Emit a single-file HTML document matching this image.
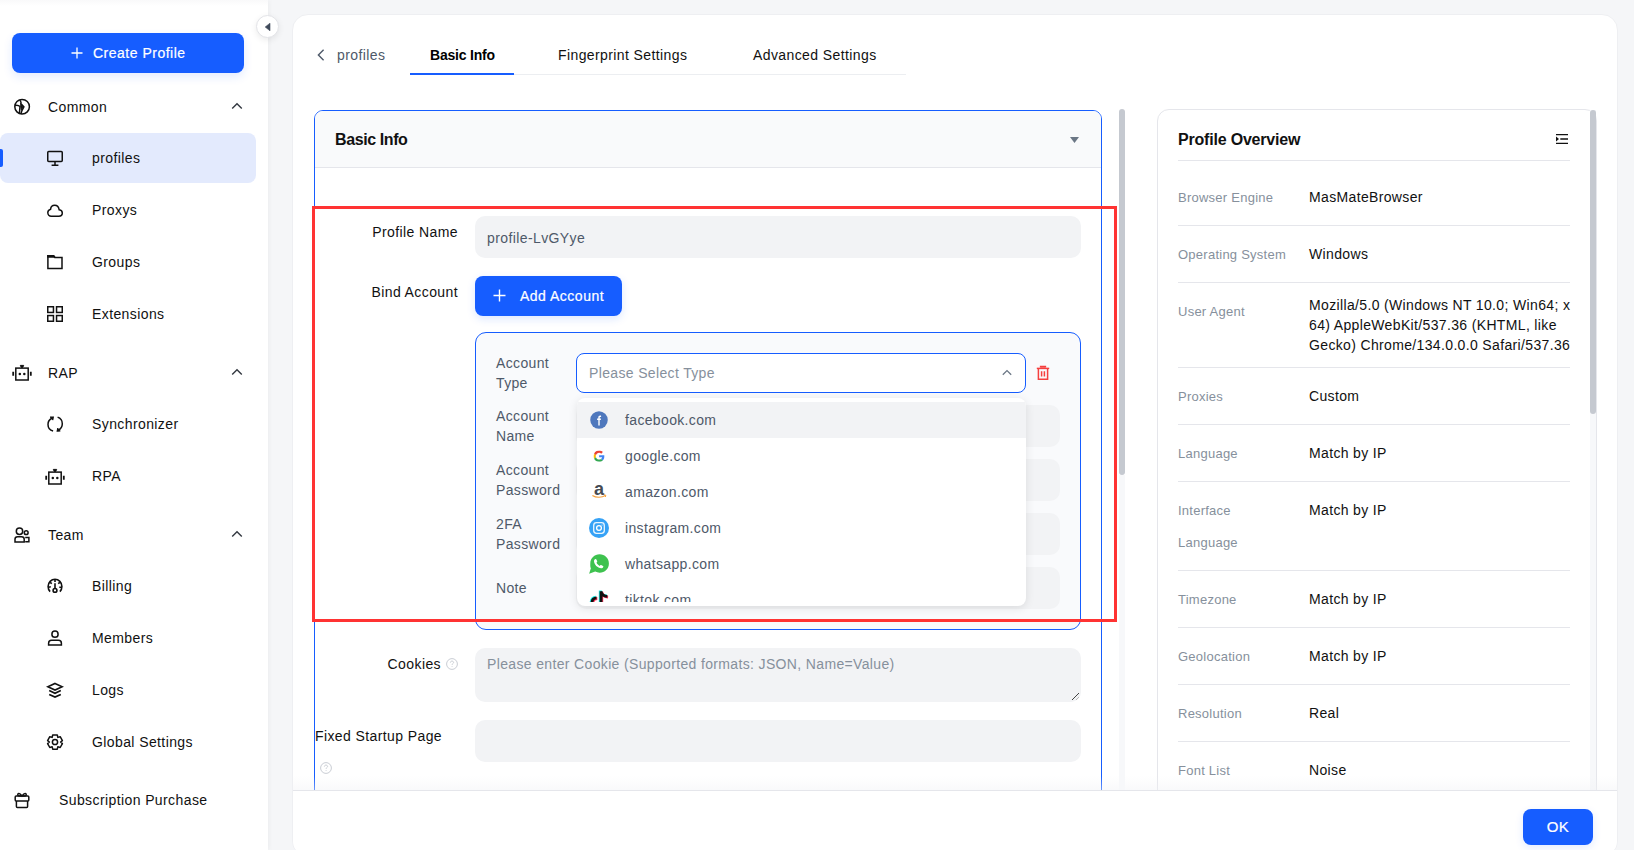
<!DOCTYPE html>
<html><head><meta charset="utf-8">
<style>
*{box-sizing:border-box;margin:0;padding:0}
html,body{width:1634px;height:850px;overflow:hidden}
body{position:relative;background:#f5f6f8;font-family:"Liberation Sans",sans-serif;color:#111;font-size:14px;letter-spacing:0.4px}
.abs{position:absolute}
svg{display:block}
/* sidebar */
#side{position:absolute;left:0;top:0;width:268px;height:850px;background:#fff;box-shadow:1px 0 5px rgba(0,0,0,0.045)}
#side .topfade{position:absolute;left:0;top:0;width:268px;height:6px;background:linear-gradient(#f9f9fa,#fff)}
.cbtn{position:absolute;left:12px;top:33px;width:232px;height:40px;border-radius:8px;background:#165dff;color:#fff;box-shadow:0 4px 10px rgba(22,93,255,0.12)}
.cbtn .lbl{position:absolute;left:81px;top:0;line-height:40px;font-size:14px;letter-spacing:0.5px;-webkit-text-stroke:0.2px #fff}
.grp{position:absolute;left:48px;font-size:14px;line-height:20px;color:#111}
.gic{position:absolute;left:14px;width:16px;height:16px}
.chev{position:absolute;left:231px;width:12px;height:8px}
.item{position:absolute;left:92px;font-size:14px;line-height:20px;color:#111}
.iic{position:absolute;left:47px;width:16px;height:16px}
#active{position:absolute;left:0;top:133px;width:256px;height:50px;border-radius:8px;background:#e3eafd}
#activebar{position:absolute;left:0;top:149px;width:3px;height:18px;background:#165dff;border-radius:0 2px 2px 0}
#toggle{position:absolute;left:256px;top:15px;width:23px;height:23px;border-radius:50%;background:#fff;border:1px solid #e3e4e8;box-shadow:0 2px 6px rgba(0,0,0,0.08)}
/* main */
#main{position:absolute;left:292px;top:14px;width:1326px;height:843px;background:#fff;border-radius:16px;border:1px solid #eeeff2}

#tabs .t{position:absolute;top:45px;line-height:20px;font-size:14px;color:#111}
#card{position:absolute;left:314px;top:110px;width:788px;height:760px;border:1px solid #165dff;border-radius:9px;background:#fff;overflow:hidden}
#card .hd{position:absolute;left:0;top:0;width:786px;height:57px;background:#f9fafb;border-bottom:1px solid #e5e6eb}
.lab{position:absolute;font-size:14px;line-height:20px;color:#111;text-align:right}
.inp{position:absolute;background:#f2f3f5;border-radius:10px}
.sublab{position:absolute;left:496px;font-size:14px;line-height:20px;color:#4e5969;letter-spacing:0.35px}
.sinp{position:absolute;left:576px;width:484px;height:42px;background:#f2f3f5;border-radius:10px}
.dd{position:absolute;left:577px;top:398px;width:449px;height:208px;background:#fff;border-radius:8px;box-shadow:0 2px 10px rgba(0,0,0,0.10);overflow:hidden}
.dd .it{position:absolute;left:0;width:449px;height:36px}
.dd .it span{position:absolute;left:48px;top:8px;line-height:20px;font-size:14px;color:#4e5969;letter-spacing:0.35px}
.dd .ic{position:absolute;left:12px;top:8px;width:20px;height:20px}
.ovl{position:absolute;left:1178px;margin-top:1px;font-size:13px;line-height:32px;color:#86909c;letter-spacing:0.25px}
.ovv{position:absolute;left:1309px;font-size:14px;line-height:32px;color:#111;letter-spacing:0.35px}
.ovline{position:absolute;left:1178px;width:392px;height:1px;background:#e5e6eb}
</style></head>
<body>
<div id="side">
  <div class="topfade"></div>
  <div class="cbtn">
    <svg class="abs" style="left:59px;top:14px" width="12" height="12" viewBox="0 0 12 12"><path d="M6 0.5V11.5M0.5 6H11.5" stroke="#fff" stroke-width="1.3"/></svg>
    <span class="lbl">Create Profile</span>
  </div>
  <div id="active"></div><div id="activebar"></div>

  <!-- Common -->
  <svg class="abs" style="left:13px;top:98px" width="18" height="18" viewBox="0 0 18 18" fill="none" stroke="#111" stroke-width="1.5"><circle cx="9.1" cy="8.7" r="7.3"/><path d="M2 7.4 C4 7.1 5.9 7.4 7 8.6 L6.4 15.6" /><path d="M7 2.2 L8 4.3 L7.8 5.6 L10.9 8.9 L8.9 12.6 L7.9 16"/><path d="M7.6 6.4 L10 8.9 L8.3 11.8Z" fill="#111" stroke-width="1"/></svg>
  <div class="grp" style="top:97px">Common</div>
  <svg class="chev" style="top:102px" viewBox="0 0 12 8" fill="none" stroke="#333840" stroke-width="1.4"><path d="M1.2 6.6 L6 1.8 L10.8 6.6"/></svg>
  <!-- profiles -->
  <svg class="abs" style="left:46px;top:149px" width="18" height="18" viewBox="0 0 18 18" fill="none" stroke="#111" stroke-width="1.5"><rect x="1.75" y="2.4" width="14.5" height="10.2" rx="1"/><path d="M9 12.6V16 M5.6 16.2H12.4"/></svg>
  <div class="item" style="top:148px">profiles</div>
  <!-- Proxys -->
  <svg class="abs" style="left:46px;top:201px" width="18" height="18" viewBox="0 0 18 18" fill="none" stroke="#111" stroke-width="1.5"><path d="M5.2 15.2 H12.8 C14.9 15.2 16.3 13.8 16.3 12 C16.3 10.2 15 9.1 13.2 8.8 C12.8 6.2 11 4.3 8.7 4.3 C6.4 4.3 4.8 6 4.6 8.2 C2.9 8.7 1.8 9.9 1.8 11.6 C1.8 13.6 3.3 15.2 5.2 15.2 Z"/></svg>
  <div class="item" style="top:200px">Proxys</div>
  <!-- Groups -->
  <svg class="abs" style="left:46px;top:253px" width="18" height="18" viewBox="0 0 18 18" fill="none" stroke="#111" stroke-width="1.5"><path d="M1.9 2.8 H7.6 L8.8 4.6 H16 V15.6 H1.9 Z"/><path d="M1.9 2.8 H7.6 L8.6 4 H1.9Z" fill="#111"/></svg>
  <div class="item" style="top:252px">Groups</div>
  <!-- Extensions -->
  <svg class="abs" style="left:46px;top:305px" width="18" height="18" viewBox="0 0 18 18" fill="none" stroke="#111" stroke-width="1.5"><rect x="1.75" y="1.75" width="5.7" height="5.7"/><rect x="10.55" y="1.75" width="5.7" height="5.7"/><rect x="1.75" y="10.55" width="5.7" height="5.7"/><rect x="10.55" y="10.55" width="5.7" height="5.7"/></svg>
  <div class="item" style="top:304px">Extensions</div>
  <!-- RAP -->
  <svg class="abs" style="left:12px;top:363px" width="20" height="20" viewBox="0 0 20 20" fill="none" stroke="#111" stroke-width="1.5"><rect x="3.8" y="5.1" width="12.4" height="11.9"/><path d="M8.3 2.4 H11.7 L10.7 4.4 H9.3Z" fill="#111" stroke-width="1"/><path d="M1.2 8.8V12.8 M18.8 8.8V12.8" stroke-width="1.8"/><circle cx="7.8" cy="10.9" r="1.25" fill="#111" stroke="none"/><circle cx="12.3" cy="10.9" r="1.25" fill="#111" stroke="none"/></svg>
  <div class="grp" style="top:363px">RAP</div>
  <svg class="chev" style="top:368px" viewBox="0 0 12 8" fill="none" stroke="#333840" stroke-width="1.4"><path d="M1.2 6.6 L6 1.8 L10.8 6.6"/></svg>
  <!-- Synchronizer -->
  <svg class="abs" style="left:46px;top:415px" width="18" height="18" viewBox="0 0 18 18" fill="none" stroke="#111" stroke-width="1.5"><path d="M7.1 15.9 C4 15.2 2 12.6 2 9.4 C2 6.7 3.5 4.3 5.9 3.2"/><path d="M4 2.2 L7.3 2.1 L6.7 5.2" fill="#111" stroke-width="1.2"/><path d="M11.6 2.1 C14.4 3 16.3 5.6 16.3 8.8 C16.3 11.4 14.9 13.8 12.6 15"/><path d="M14.4 16 L11.2 16.2 L11.8 13" fill="#111" stroke-width="1.2"/></svg>
  <div class="item" style="top:414px">Synchronizer</div>
  <!-- RPA -->
  <svg class="abs" style="left:45px;top:467px" width="20" height="20" viewBox="0 0 20 20" fill="none" stroke="#111" stroke-width="1.5"><rect x="3.8" y="5.1" width="12.4" height="11.9"/><path d="M8.3 2.4 H11.7 L10.7 4.4 H9.3Z" fill="#111" stroke-width="1"/><path d="M1.2 8.8V12.8 M18.8 8.8V12.8" stroke-width="1.8"/><circle cx="7.8" cy="10.9" r="1.25" fill="#111" stroke="none"/><circle cx="12.3" cy="10.9" r="1.25" fill="#111" stroke="none"/></svg>
  <div class="item" style="top:466px">RPA</div>
  <!-- Team -->
  <svg class="abs" style="left:13px;top:526px" width="18" height="18" viewBox="0 0 18 18" fill="none" stroke="#111" stroke-width="1.5"><circle cx="6.5" cy="5.3" r="3.2"/><path d="M2 15.9 V13.2 C2 11.6 3 10.8 4.6 10.8 H8.6 C10.2 10.8 11.2 11.6 11.2 13.2 V15.9 Z"/><circle cx="13.2" cy="6.7" r="1.9"/><path d="M12.2 11.5 H15.9 V15.8 H12.2"/></svg>
  <div class="grp" style="top:525px">Team</div>
  <svg class="chev" style="top:530px" viewBox="0 0 12 8" fill="none" stroke="#333840" stroke-width="1.4"><path d="M1.2 6.6 L6 1.8 L10.8 6.6"/></svg>
  <!-- Billing -->
  <svg class="abs" style="left:46px;top:577px" width="18" height="18" viewBox="0 0 18 18" fill="none" stroke="#111" stroke-width="1.6"><path d="M4.1 14.6 C2.9 13.3 2.1 11.5 2.1 9.5 C2.1 5.5 5.2 2.3 9 2.3 C12.8 2.3 15.9 5.5 15.9 9.5 C15.9 11.5 15.1 13.3 13.9 14.6"/><path d="M9 2.6V5 M4.1 5.3 L5.8 6.7 M13.9 5.3 L12.2 6.7 M2.5 10.2 L4.8 9.8 M15.5 10.2 L13.3 10.2 M9 6.3V11.6" /><circle cx="9" cy="13.4" r="1.9"/></svg>
  <div class="item" style="top:576px">Billing</div>
  <!-- Members -->
  <svg class="abs" style="left:46px;top:629px" width="18" height="18" viewBox="0 0 18 18" fill="none" stroke="#111" stroke-width="1.5"><circle cx="9" cy="5.2" r="3.1"/><path d="M2.6 16 V14.2 C2.6 12.2 3.6 11.2 5.6 11.2 H12.4 C14.4 11.2 15.4 12.2 15.4 14.2 V16 Z"/></svg>
  <div class="item" style="top:628px">Members</div>
  <!-- Logs -->
  <svg class="abs" style="left:46px;top:681px" width="18" height="18" viewBox="0 0 18 18" fill="none" stroke="#111" stroke-width="1.6"><path d="M9 2.5 L16.2 5.8 L9 9.1 L1.8 5.8 Z"/><path d="M3.2 9.6 L9 12.3 L14.8 9.6 M3.2 13.4 L9 16.1 L14.8 13.4"/></svg>
  <div class="item" style="top:680px">Logs</div>
  <!-- Global Settings -->
  <svg class="abs" style="left:46px;top:733px" width="18" height="18" viewBox="0 0 18 18" fill="none" stroke="#111" stroke-width="1.5"><path d="M6.7 1.9 H11.3 L11.8 4.4 L14.2 3.7 L16.4 7.6 L14.6 9 L16.4 10.6 L14.2 14.5 L11.8 13.8 L11.3 16.2 H6.7 L6.2 13.8 L3.8 14.5 L1.6 10.6 L3.4 9 L1.6 7.6 L3.8 3.7 L6.2 4.4 Z" stroke-linejoin="round"/><circle cx="9" cy="9" r="2.6"/></svg>
  <div class="item" style="top:732px">Global Settings</div>
  <!-- Subscription Purchase -->
  <svg class="abs" style="left:13px;top:791px" width="18" height="18" viewBox="0 0 18 18" fill="none" stroke="#111" stroke-width="1.5"><rect x="2.2" y="5" width="13.6" height="5.1" rx="1"/><path d="M3.4 10.1 V15.4 C3.4 16 3.8 16.4 4.4 16.4 H13.6 C14.2 16.4 14.6 16 14.6 15.4 V10.1"/><path d="M9 5 C8 3.5 7.2 2.4 5.9 2.4 C4.9 2.4 4.5 3.5 5 4.4 C5.5 5 7 5 9 5 C11 5 12.5 5 13 4.4 C13.5 3.5 13.1 2.4 12.1 2.4 C10.8 2.4 10 3.5 9 5Z"/></svg>
  <div class="grp" style="top:790px;left:59px">Subscription Purchase</div>
</div>
<div id="toggle"><svg class="abs" style="left:7px;top:6px" width="8" height="10" viewBox="0 0 8 10"><path d="M1.2 5 L6 1.2 V8.8Z" fill="#3f4a5a" stroke="#3f4a5a" stroke-width="0.6" stroke-linejoin="round"/></svg></div>
<div id="main"></div>

<div id="tabs">
  <svg class="abs" style="left:316px;top:49px" width="10" height="12" viewBox="0 0 10 12" fill="none" stroke="#4e5969" stroke-width="1.4"><path d="M7.6 0.8 L2.4 6 L7.6 11.2"/></svg>
  <div class="t" style="left:337px;color:#4e5969">profiles</div>
  <div class="abs" style="left:410px;top:74px;width:496px;height:1px;background:#eceef1"></div>
  <div class="abs" style="left:410px;top:73px;width:104px;height:2px;background:#165dff"></div>
  <div class="t" style="left:430px;font-weight:bold;letter-spacing:-0.2px;color:#000">Basic Info</div>
  <div class="t" style="left:558px">Fingerprint Settings</div>
  <div class="t" style="left:753px">Advanced Settings</div>
</div>
<div id="card">
  <div class="hd">
    <div class="abs" style="left:20px;top:18px;font-size:16px;line-height:22px;font-weight:bold;letter-spacing:-0.4px;color:#111">Basic Info</div>
    <svg class="abs" style="left:755px;top:26px" width="9" height="6" viewBox="0 0 9 6"><path d="M0 0 H9 L4.5 6Z" fill="#6b7785"/></svg>
  </div>
</div>
<!-- form -->
<div class="lab" style="left:300px;width:158px;top:222px">Profile Name</div>
<div class="inp" style="left:475px;top:216px;width:606px;height:42px"></div>
<div class="abs" style="left:487px;top:228px;line-height:20px;color:#4e5969">profile-LvGYye</div>
<div class="lab" style="left:300px;width:158px;top:282px">Bind Account</div>
<div class="abs" style="left:475px;top:276px;width:147px;height:40px;background:#165dff;border-radius:8px;box-shadow:0 3px 8px rgba(22,93,255,0.15)">
  <svg class="abs" style="left:18px;top:13px" width="13" height="13" viewBox="0 0 13 13"><path d="M6.5 0.5V12.5M0.5 6.5H12.5" stroke="#fff" stroke-width="1.4"/></svg>
  <div class="abs" style="left:45px;top:10px;line-height:20px;color:#fff;letter-spacing:0.5px;-webkit-text-stroke:0.2px #fff">Add Account</div>
</div>
<div class="abs" style="left:475px;top:332px;width:606px;height:298px;border:1px solid #165dff;border-radius:11px;background:#f9fafc"></div>
<div class="sublab" style="top:353px">Account<br>Type</div>
<div class="abs" style="left:576px;top:353px;width:450px;height:40px;border:1px solid #165dff;border-radius:8px;background:#fff"></div>
<div class="abs" style="left:589px;top:363px;line-height:20px;color:#86909c;letter-spacing:0.35px">Please Select Type</div>
<svg class="abs" style="left:1001px;top:368px" width="12" height="9" viewBox="0 0 12 9" fill="none" stroke="#6b7785" stroke-width="1.3"><path d="M1.8 6.8 L6 2.6 L10.2 6.8"/></svg>
<svg class="abs" style="left:1035px;top:365px" width="16" height="16" viewBox="0 0 16 16" fill="none" stroke="#f53f3f" stroke-width="1.5"><path d="M1.8 3.4 H14.2"/><path d="M5.6 2.6 V1.6 H10.4 V2.6" fill="#f53f3f"/><path d="M3.4 3.4 V14.3 H12.6 V3.4"/><path d="M6.6 6.2 V11.4 M9.4 6.2 V11.4"/></svg>
<div class="sublab" style="top:406px">Account<br>Name</div>
<div class="sinp" style="top:405px"></div>
<div class="sublab" style="top:460px">Account<br>Password</div>
<div class="sinp" style="top:459px"></div>
<div class="sublab" style="top:514px">2FA<br>Password</div>
<div class="sinp" style="top:513px"></div>
<div class="sublab" style="top:578px">Note</div>
<div class="sinp" style="top:567px"></div>
<div class="dd"><div class="abs" style="left:0;top:4px;width:449px;height:200px;overflow:hidden">
  <div class="it" style="top:0px;background:#f2f3f5"><svg class="ic" viewBox="0 0 20 20"><circle cx="10" cy="10" r="8.75" fill="#4f78bd"/><path d="M9.3 15.4 V9.9 H8.1 V8.6 H9.3 V7.6 C9.3 6.4 9.9 5.6 11.2 5.6 C11.6 5.6 12 5.7 12.1 5.7 V6.9 H11.5 C10.9 6.9 10.7 7.2 10.7 7.7 V8.6 H12 L11.8 9.9 H10.7 V15.4Z" fill="#fff"/></svg><span>facebook.com</span></div>
  <div class="it" style="top:36px"><svg class="ic" viewBox="0 0 20 20"><svg x="4.5" y="4.6" width="11.2" height="11.2" viewBox="0 0 48 48"><path fill="#EA4335" d="M24 9.5c3.54 0 6.71 1.22 9.21 3.6l6.85-6.85C35.9 2.38 30.47 0 24 0 14.62 0 6.51 5.38 2.56 13.220l7.98 6.19C12.43 13.72 17.74 9.5 24 9.5z"/><path fill="#4285F4" d="M46.98 24.55c0-1.57-.15-3.09-.38-4.55H24v9.02h12.94c-.58 2.96-2.26 5.48-4.78 7.18l7.73 6c4.510-4.18 7.09-10.36 7.09-17.65z"/><path fill="#FBBC05" d="M10.53 28.59c-.48-1.45-.76-2.99-.76-4.59s.27-3.14.76-4.59l-7.98-6.19C.92 16.46 0 20.12 0 24c0 3.88.92 7.54 2.56 10.78l7.97-6.19z"/><path fill="#34A853" d="M24 48c6.48 0 11.93-2.13 15.89-5.81l-7.73-6c-2.15 1.45-4.92 2.3-8.16 2.3-6.26 0-11.57-4.22-13.47-9.91l-7.98 6.19C6.51 42.62 14.62 48 24 48z"/></svg></svg><span>google.com</span></div>
  <div class="it" style="top:72px"><svg class="ic" viewBox="0 0 20 20"><text x="10" y="13.4" text-anchor="middle" font-family="Liberation Sans" font-weight="bold" font-size="18" fill="#454b53" letter-spacing="0">a</text><path d="M3.4 13.4 C7 15.8 12.6 15.8 16.4 13.6" fill="none" stroke="#f5a03a" stroke-width="1.2"/><path d="M15 12.7 L16.8 13.3 L16.4 15" fill="none" stroke="#f5a03a" stroke-width="1"/></svg><span>amazon.com</span></div>
  <div class="it" style="top:108px"><svg class="ic" viewBox="0 0 20 20"><circle cx="10" cy="10" r="10" fill="#36a2f6"/><rect x="4.7" y="4.7" width="10.6" height="10.6" rx="2.8" fill="none" stroke="#fff" stroke-width="1.3" opacity="0.9"/><circle cx="10" cy="10" r="2.4" fill="none" stroke="#fff" stroke-width="1.3"/><circle cx="13" cy="7" r="0.6" fill="#fff"/></svg><span>instagram.com</span></div>
  <div class="it" style="top:144px"><svg class="ic" viewBox="0 0 20 20"><path d="M10.6 0.2 C15.8 0.2 19.9 4.3 19.9 9.4 C19.9 14.6 15.8 18.7 10.6 18.7 C9 18.7 7.5 18.3 6.2 17.6 L0.1 19.8 L1.9 14.2 C1.1 12.8 1.3 11.1 1.3 9.4 C1.3 4.3 5.5 0.2 10.6 0.2Z" fill="#3ec24f"/><path d="M6.6 4.9 C7 4.9 7.2 5.1 7.4 5.4 L8.2 7.3 C8.3 7.6 8.2 7.9 8 8.1 L7.5 8.7 C8.2 10.1 9.3 11.2 10.7 11.9 L11.3 11.3 C11.5 11.1 11.8 11 12.1 11.1 L14 12 C14.3 12.1 14.4 12.4 14.3 12.7 C14.1 13.7 13.1 14.3 12.2 14.3 C8.7 14.3 5 10.6 5 7.1 C5 6 5.6 4.9 6.6 4.9Z" fill="#fff"/></svg><span>whatsapp.com</span></div>
  <div class="it" style="top:180px"><svg class="ic" viewBox="0 0 20 20"><path transform="translate(-0.8,-0.7)" d="M12 1.2 V12.3 C12 14.8 10 16.8 7.5 16.8 C5 16.8 3 14.8 3 12.3 C3 9.8 5 7.8 7.5 7.8 M12 1.2 C12.5 4 15 6.2 18.3 6.4" fill="none" stroke="#25f4ee" stroke-width="2.8"/><path transform="translate(0.8,0.7)" d="M12 1.2 V12.3 C12 14.8 10 16.8 7.5 16.8 C5 16.8 3 14.8 3 12.3 C3 9.8 5 7.8 7.5 7.8 M12 1.2 C12.5 4 15 6.2 18.3 6.4" fill="none" stroke="#fe2c55" stroke-width="2.8"/><path d="M12 1.2 V12.3 C12 14.8 10 16.8 7.5 16.8 C5 16.8 3 14.8 3 12.3 C3 9.8 5 7.8 7.5 7.8 M12 1.2 C12.5 4 15 6.2 18.3 6.4" fill="none" stroke="#111" stroke-width="2.8"/></svg><span>tiktok.com</span></div>
</div></div>
<div class="lab" style="left:300px;width:141px;top:654px">Cookies</div>
<svg class="abs" style="left:446px;top:658px" width="12" height="12" viewBox="0 0 12 12" fill="none" stroke="#c9cdd4" stroke-width="1"><circle cx="6" cy="6" r="5.4"/><path d="M4.4 4.6 C4.4 3.7 5.1 3.1 6 3.1 C6.9 3.1 7.6 3.7 7.6 4.5 C7.6 5.5 6.1 5.6 6.1 6.8"/><circle cx="6.05" cy="8.6" r="0.5" fill="#c9cdd4" stroke="none"/></svg>
<div class="inp" style="left:475px;top:648px;width:606px;height:54px"></div>
<div class="abs" style="left:487px;top:654px;line-height:20px;color:#86909c;letter-spacing:0.35px">Please enter Cookie (Supported formats: JSON, Name=Value)</div>
<svg class="abs" style="left:1070px;top:691px" width="10" height="10" viewBox="0 0 10 10"><path d="M2 9 L9 2" stroke="#444" stroke-width="1"/><path d="M6 9 L9 6" stroke="#bbb" stroke-width="1"/></svg>
<div class="lab" style="left:315px;top:726px;text-align:left">Fixed Startup Page</div>
<svg class="abs" style="left:320px;top:762px" width="12" height="12" viewBox="0 0 12 12" fill="none" stroke="#c9cdd4" stroke-width="1"><circle cx="6" cy="6" r="5.4"/><path d="M4.4 4.6 C4.4 3.7 5.1 3.1 6 3.1 C6.9 3.1 7.6 3.7 7.6 4.5 C7.6 5.5 6.1 5.6 6.1 6.8"/><circle cx="6.05" cy="8.6" r="0.5" fill="#c9cdd4" stroke="none"/></svg>
<div class="inp" style="left:475px;top:720px;width:606px;height:42px"></div>

<!-- overview -->
<div class="abs" style="left:1157px;top:109px;width:440px;height:760px;border:1px solid #e5e6eb;border-radius:12px;background:#fff"></div>
<div class="abs" style="left:1178px;top:129px;font-size:16px;line-height:22px;font-weight:bold;letter-spacing:-0.2px;color:#111">Profile Overview</div>
<svg class="abs" style="left:1555px;top:133px" width="14" height="12" viewBox="0 0 14 12"><path d="M1 1.6H13M5.3 6H13M1 10.4H13" stroke="#111" stroke-width="1.4"/><path d="M1 3.6 L4 6 L1 8.4Z" fill="#111"/></svg>
<div class="ovline" style="top:160px"></div>
<div class="ovl" style="top:181px">Browser Engine</div><div class="ovv" style="top:181px">MasMateBrowser</div>
<div class="ovline" style="top:225px"></div>
<div class="ovl" style="top:238px">Operating System</div><div class="ovv" style="top:238px">Windows</div>
<div class="ovline" style="top:282px"></div>
<div class="ovl" style="top:295px">User Agent</div><div class="ovv" style="top:295px;line-height:20px;width:262px">Mozilla/5.0 (Windows NT 10.0; Win64; x<br>64) AppleWebKit/537.36 (KHTML, like<br>Gecko) Chrome/134.0.0.0 Safari/537.36</div>
<div class="ovline" style="top:367px"></div>
<div class="ovl" style="top:380px">Proxies</div><div class="ovv" style="top:380px">Custom</div>
<div class="ovline" style="top:424px"></div>
<div class="ovl" style="top:437px">Language</div><div class="ovv" style="top:437px">Match by IP</div>
<div class="ovline" style="top:481px"></div>
<div class="ovl" style="top:494px">Interface<br>Language</div><div class="ovv" style="top:494px">Match by IP</div>
<div class="ovline" style="top:570px"></div>
<div class="ovl" style="top:583px">Timezone</div><div class="ovv" style="top:583px">Match by IP</div>
<div class="ovline" style="top:627px"></div>
<div class="ovl" style="top:640px">Geolocation</div><div class="ovv" style="top:640px">Match by IP</div>
<div class="ovline" style="top:684px"></div>
<div class="ovl" style="top:697px">Resolution</div><div class="ovv" style="top:697px">Real</div>
<div class="ovline" style="top:741px"></div>
<div class="ovl" style="top:754px">Font List</div><div class="ovv" style="top:754px">Noise</div>
<div class="ovline" style="top:798px"></div>
<div class="abs" style="left:1590px;top:110px;width:6px;height:680px;background:#f7f8fa"></div>
<div class="abs" style="left:1590px;top:110px;width:6px;height:304px;background:#c5c9d0;border-radius:3px"></div>
<!-- footer -->
<div class="abs" style="left:293px;top:776px;width:1324px;height:14px;background:linear-gradient(rgba(255,255,255,0),rgba(240,241,244,0.4))"></div>
<div class="abs" style="left:293px;top:790px;width:1324px;height:66px;background:#fff;border-top:1px solid #e5e6eb;border-radius:0 0 15px 15px"></div>
<div class="abs" style="left:1523px;top:809px;width:70px;height:36px;background:#165dff;border-radius:8px;box-shadow:0 3px 8px rgba(22,93,255,0.12)"><div class="abs" style="left:0;top:8px;width:70px;text-align:center;line-height:20px;font-size:15px;color:#fff;letter-spacing:0.3px;-webkit-text-stroke:0.2px #fff">OK</div></div>
<!-- red annotation -->
<div class="abs" style="left:312px;top:206px;width:805px;height:416px;border:3px solid #f33"></div>
<!-- left scrollbar -->
<div class="abs" style="left:1119px;top:475px;width:6px;height:315px;background:#f7f8fa"></div>
<div class="abs" style="left:1119px;top:109px;width:6px;height:366px;background:#c5c9d0;border-radius:3px"></div>

</body></html>
